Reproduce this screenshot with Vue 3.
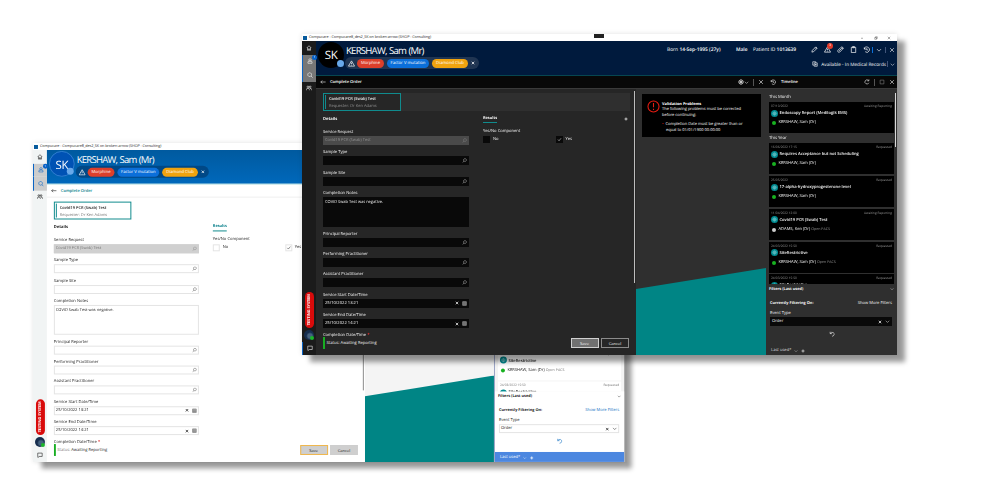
<template>
  <div class="stage">
    <section v-for="w in themes" :key="w" class="window" :class="w">
      <div class="titlebar">
        <span class="app-logo"></span>
        <span class="app-title">Compucare - Compucare8_des2_SK on broken-arrow (SHOP - Consulting)</span>
        <span class="notch"></span>
        <span class="controls"><Icon name="minus" /><Icon name="restore" /><Icon name="close" /></span>
      </div>

      <div class="body">
        <nav class="rail">
          <div class="rail-item"><Icon name="home" /></div>
          <div class="rail-item active"><Icon name="person" /><i class="badge">1</i></div>
          <div class="rail-item active"><Icon name="search" /></div>
          <div class="rail-item"><Icon name="people" /></div>
          <div class="rail-space"></div>
          <div class="testing"><span>TESTING SYSTEM</span></div>
          <div class="globe"><i></i></div>
          <div class="rail-item chat"><Icon name="chat" /></div>
        </nav>

        <div class="main">
          <header class="patient">
            <div class="avatar">SK<i></i></div>
            <div class="identity">
              <h1>KERSHAW, Sam (Mr)</h1>
              <div class="alerts">
                <Icon name="alert" />
                <span class="pill red">Morphine</span>
                <span class="pill blue">Factor V mutation</span>
                <span class="pill amber">Diamond Club</span>
                <Icon name="close" class="bold" />
              </div>
            </div>
            <div class="patient-info">
              <div class="facts">
                <span class="born">Born <b>14-Sep-1995 (27y)</b></span>
                <span class="sex"><b>Male</b></span>
                <span class="pid">Patient ID <b>1013639</b></span>
                <span class="tools">
                  <Icon name="pencil" />
                  <span class="warn"><Icon name="alert" /><i>3</i></span>
                  <Icon name="clip" />
                  <Icon name="clipboard" />
                  <Icon name="history" />
                </span>
                <span class="tool-end"><Icon name="chevron" /></span>
                <span class="tool-close"><Icon name="close" /></span>
              </div>
              <div class="location">
                <Icon name="copy" />
                <span>Available - In Medical Records</span>
                <em></em>
                <Icon name="chevron" />
              </div>
            </div>
          </header>

          <div class="bars">
            <div class="order-bar">
              <Icon name="back" />
              <b>Complete Order</b>
              <span class="grow"></span>
              <Icon name="gear" /><Icon name="chevron" class="tiny" />
              <em></em>
              <Icon name="close" />
            </div>
            <div class="timeline-bar">
              <Icon name="history" />
              <b>Timeline</b>
              <span class="grow"></span>
              <Icon name="refresh" />
              <em></em>
              <Icon name="box" class="dim" />
              <Icon name="close" />
            </div>
          </div>

          <div class="columns">
            <div class="order">
              <div class="order-strip">
                <div class="order-card">
                  <div>
                    <b>Covid19 PCR (Swab) Test</b>
                    <span>Requester: Dr Ken Adams</span>
                  </div>
                </div>
              </div>
              <div class="form">
                <div class="details">
                  <h2>Details</h2>
                  <div v-for="f in fields" :key="f.label" class="field" :class="f.kind">
                    <label>{{ f.label }}<i v-if="f.required"> *</i></label>
                    <div class="input">
                      <span>{{ f.value }}</span>
                      <Icon v-if="f.kind === 'date'" name="close" class="bold" />
                      <Icon v-if="f.kind === 'date'" name="calendar" />
                      <Icon v-else-if="f.kind !== 'notes'" name="lookup" />
                    </div>
                  </div>
                </div>
                <div class="results">
                  <div class="results-head"><b>Results</b><Icon name="plus" class="bold" /></div>
                  <label>Yes/No Component</label>
                  <div class="checks">
                    <span><i class="check"></i>No</span>
                    <span><i class="check"><Icon name="tick" /></i>Yes</span>
                  </div>
                </div>
              </div>
              <div class="order-foot">
                <div class="status"><span>Status:</span> Awaiting Reporting</div>
                <button class="save">Save</button>
                <button>Cancel</button>
              </div>
              <div class="scroll"></div>
            </div>

            <div class="problems">
              <div class="problem-card">
                <svg class="bang" viewBox="0 0 24 24"><circle cx="12" cy="12" r="10.2" /><path d="M12 5.5v8M12 16v2.5" /></svg>
                <div>
                  <b>Validation Problems</b>
                  <p>The following problems must be corrected</p>
                  <p>before continuing:</p>
                  <p class="bullet">Completion Date must be greater than or</p>
                  <p class="indent">equal to 01/01/1900 00:00:00</p>
                </div>
              </div>
              <svg class="slope" viewBox="0 0 130 87" preserveAspectRatio="none"><polygon points="0,21 130,0 130,87 0,87" /></svg>
            </div>

            <aside class="timeline">
              <div class="events">
                <template v-for="(e, i) in events" :key="i">
                  <h3 v-if="e.group">{{ e.group }}</h3>
                  <article>
                    <div class="meta"><span>{{ e.date }}</span><span>{{ e.state }}</span></div>
                    <div class="event"><i><Icon name="target" /></i><b>{{ e.title }}</b></div>
                    <div v-if="e.who" class="who"><i :class="{ away: e.away }"></i>{{ e.who }}<small v-if="e.pacs">Open PACS</small></div>
                  </article>
                </template>
                <div class="event-scroll"></div>
              </div>
              <div class="filters">
                <div class="filter-title"><b>Filters (Last used)</b><Icon name="chevron" /></div>
                <div class="filter-on"><b>Currently Filtering On:</b><a>Show More Filters</a></div>
                <label>Event Type</label>
                <div class="select"><span>Order</span><Icon name="close" class="bold" /><Icon name="chevron" /></div>
                <div class="undo"><Icon name="undo" /></div>
                <div class="filter-foot">Last used* <Icon name="chevron" /><Icon name="plus" class="bold" /></div>
              </div>
            </aside>
          </div>
        </div>
      </div>
    </section>
  </div>
</template>

<script setup>
import { h } from "vue";

const paths = {
  minus: "M4 9h8",
  restore: "M3 6h7v7H3zM6 6V3h7v7h-3",
  close: "M3 3l10 10M13 3L3 13",
  home: "M2 8l6-6 6 6M4 7v7h3v-4h2v4h3V7",
  person: "M8 2a3 3 0 1 0 .1 0M2.5 14V11q0-2.500 3-2.500h5q3 0 3 2.500v3z",
  search: "M7 2a5 5 0 1 0 .1 0M10.500 10.500L15 15",
  lookup: "M9.500 2a4.500 4.500 0 1 0 .1 0M6.500 10L2 14",
  people: "M5 3a2.300 2.300 0 1 0 .1 0M11 3a2.300 2.300 0 1 0 .1 0M1 14v-2q0-3 4-3t4 3v2M10 9q5-.5 5 3v2",
  chat: "M2 3h12v9H6l-3 3v-3H2z",
  alert: "M8 2L15 14H1zM8 6v4M8 11.500v1",
  pencil: "M2 14l1-4 8-8 3 3-8 8zM9.500 3.500l3 3",
  clip: "M5 11l6-6q1.500-1 2 .5t-1 2.500l-6 6q-2 1-3.500-.5t-.5-3.500l7-7q2-1.500 4 0t.5 4",
  clipboard: "M3 3h10v12H3zM6 3V1h4v3H6z",
  history: "M3 3v4h4M3 7a6 6 0 1 1 2 6M8.500 5v4h3",
  chevron: "M2.500 5.500L8 11l5.500-5.500",
  copy: "M6 5h8v9H6zM6 11H2V2h8v3M10 7v5M8 9.500h4",
  back: "M15 8H2M6 4L2 8l4 4",
  gear: "M8 2a6 6 0 1 0 .1 0M8 2v12M2 8h12M4 4l8 8M12 4l-8 8",
  refresh: "M13 10a5.500 5.500 0 1 1-1-6M13 1v4H9",
  box: "M3 3h10v10H3z",
  calendar: "M2 2h12v12H2zM2 6h12M2 10h12M6 2v12M10 2v12",
  plus: "M8 2v12M2 8h12",
  tick: "M3 8l3.500 4L13 4",
  target: "M8 3a5 5 0 1 0 .1 0M8 6a2 2 0 1 0 .1 0",
  undo: "M3 2v5h5M3 7q3-5 8-3 4 2 2.500 6T8 14",
};

const Icon = (props) => h("svg", { class: "icon", viewBox: "0 0 16 16" }, [h("path", { d: paths[props.name] })]);
Icon.props = ["name"];

const themes = ["light", "dark"];

const fields = [
  { label: "Service Request", value: "Covid19 PCR (Swab) Test", kind: "locked" },
  { label: "Sample Type" },
  { label: "Sample Site" },
  { label: "Completion Notes", value: "COVID Swab Test was negative.", kind: "notes" },
  { label: "Principal Reporter" },
  { label: "Performing Practitioner" },
  { label: "Assistant Practitioner" },
  { label: "Service Start Date/Time", value: "25/10/2022 13:21", kind: "date" },
  { label: "Service End Date/Time", value: "25/10/2022 14:21", kind: "date" },
  { label: "Completion Date/Time", kind: "date", required: true },
];

const events = [
  { group: "This Month", date: "07/10/2022", state: "Awaiting Reporting", title: "Endoscopy Report (Medilogik EMS)", who: "KERSHAW, Sam (Dr)" },
  { group: "This Year", date: "16/06/2022 17:15", state: "Requested", title: "Requires Acceptance but not Scheduling", who: "KERSHAW, Sam (Dr)" },
  { date: "25/05/2022", state: "Requested", title: "17-alpha-hydroxyprogesterone level", who: "KERSHAW, Sam (Dr)" },
  { date: "11/04/2022 12:00", state: "Awaiting Reporting", title: "Covid19 PCR (Swab) Test", who: "ADAMS, Ken (Dr)", away: true, pacs: true },
  { date: "24/03/2022 15:50", state: "Requested", title: "SiteRestrictive", who: "KERSHAW, Sam (Dr)", pacs: true },
  { date: "24/03/2022 15:50", state: "Requested", title: "SiteRestrictive" },
];
</script>

<style>
body { background: #fff; }
</style>

<style scoped>
.stage {
  position: relative;
  width: 1000px;
  height: 500px;
  overflow: hidden;
  background: #fff;
}
.window {
  position: absolute;
  width: 595px;
  height: 321px;
  display: flex;
  flex-direction: column;
  font: 4.1px/6px "Open Sans", "Noto Sans", sans-serif;
  text-rendering: geometricPrecision;
  white-space: nowrap;
  color: var(--text);
  background: var(--bg);
  box-shadow: 8px 7px 5px rgba(0, 0, 0, 0.4), 0 0 5px rgba(0, 0, 0, 0.12);
}
.window * { box-sizing: border-box; }
.dark {
  left: 302px;
  top: 34px;
  --text: #f2f2f2;
  --muted: #929292;
  --bg: #262626;
  --rail: #1b1b1b;
  --active: #777;
  --head: #001a3d;
  --head-line: #064650;
  --avatar: #000;
  --alerts: #203552;
  --bar: #080808;
  --bar-text: #fff;
  --strip: #2f2f2f;
  --card: #262626;
  --input: #090909;
  --line: #090909;
  --locked: #4a4a4a;
  --panel: #2f2f2f;
  --event: #000;
  --foot: #2f2f2f;
  --foot-text: #ddd;
  --link: #f2f2f2;
  --thumb: #bdbdbd;
  --edge: #3a3a3a;
}
.light {
  left: 33px;
  top: 143px;
  transform: scale(0.9935);
  transform-origin: 0 0;
  --text: #222;
  --muted: #777;
  --bg: #fff;
  --rail: #f1f4f4;
  --active: #ccc;
  --head: #0061b0;
  --head-line: #a9dcdf;
  --avatar: #0052b4;
  --alerts: #004886;
  --bar: #fff;
  --bar-text: #087f8a;
  --strip: #fff;
  --card: #fff;
  --input: #fff;
  --line: #e4e4e4;
  --locked: #d0d0d0;
  --panel: #f4f4f4;
  --event: #fff;
  --foot: #4c87e0;
  --foot-text: #fff;
  --link: #1672c4;
  --thumb: #8b8b8b;
  --edge: #eee;
}
.icon {
  width: 6px;
  height: 6px;
  flex: none;
  fill: none;
  stroke: currentColor;
  stroke-width: 1.6;
}
.icon.bold { width: 4px; height: 4px; stroke-width: 3; }
.icon.tiny { width: 5px; height: 5px; }
.icon.dim { opacity: 0.5; }
.grow { flex: 1; }
b, h2 { font-weight: 700; }
h1, h2, h3, p { margin: 0; }

.titlebar {
  height: 7px;
  display: flex;
  align-items: center;
  background: #fff;
  color: #333;
  font-size: 3.8px;
  position: relative;
}
.app-logo { width: 4px; height: 4px; margin: 0 2px 0 1px; background: #075a9c; }
.app-title { padding-top: 1px; letter-spacing: -0.1px; }
.notch { position: absolute; left: 292px; top: 0; width: 10px; height: 4px; background: #222; }
.light .notch { display: none; }
.controls { margin-left: auto; display: flex; gap: 9.5px; padding-right: 6px; }
.controls .icon { width: 4px; height: 4px; }

.body { flex: 1; display: flex; min-height: 0; }
.rail { width: 14px; display: flex; flex-direction: column; align-items: center; background: var(--rail); }
.rail-item { position: relative; width: 14px; height: 13.5px; flex: none; display: flex; align-items: center; justify-content: center; }
.rail-item.active { background: var(--active); border-left: 1px solid #0a63c4; color: #fff; }
.light .rail-item.active { color: #0a63c4; }
.badge { position: absolute; right: -1px; top: 0; width: 5px; height: 5px; border-radius: 50%; background: #0862c8; color: #fff; font: 3px/5px "Open Sans", sans-serif; text-align: center; z-index: 1; }
.rail-space { flex: 1; }
.testing { width: 9px; height: 36px; flex: none; border-radius: 5px; background: #d90b0b; display: flex; align-items: center; justify-content: center; }
.testing span { writing-mode: vertical-rl; transform: rotate(180deg); font-size: 3.9px; font-weight: 700; letter-spacing: -0.05px; color: #fff; line-height: 9px; }
.globe { position: relative; width: 10px; height: 10px; flex: none; margin: 2px 0 2px; border-radius: 50%; background: radial-gradient(circle at 60% 60%, #45617e 0 25%, #152c4d 45%); }
.globe i { position: absolute; right: 0; bottom: 0; width: 4px; height: 4px; border-radius: 50%; background: #1bb52b; }
.dark .rail-item.chat { border-left: 1px solid #0a63c4; }

.main { flex: 1; min-width: 0; display: flex; flex-direction: column; }
.patient { height: 35px; display: flex; padding: 1px 2px 0; background: var(--head); border-bottom: 1.500px solid var(--head-line); color: #fff; }
.light .patient { background: linear-gradient(#005a9f, #0068bb); }
.avatar { position: relative; width: 26px; height: 26px; flex: none; border-radius: 50%; background: var(--avatar); font-size: 11.5px; line-height: 27px; text-align: center; letter-spacing: -0.3px; }
.light .avatar { border: 0.5px solid #2f7ed0; }
.avatar i { position: absolute; right: 0; bottom: 1px; width: 7px; height: 7px; border-radius: 50%; background: #68a9ea; }
.identity { padding: 1.5px 0 0 1px; }
h1 { font-size: 9.6px; line-height: 13px; font-weight: 400; letter-spacing: -0.77px; word-spacing: 0.6px; padding-left: 1px; }
.alerts { display: flex; align-items: center; width: 134px; height: 12px; margin-top: 0.5px; padding: 0 4px 0 3px; border-radius: 6px; background: var(--alerts); }
.alerts .icon { width: 7px; height: 7px; margin-right: 2px; }
.alerts .icon.bold { width: 4px; height: 4px; margin: 0 0 0 auto; }
.pill { height: 9px; border-radius: 5px; line-height: 10.5px; text-align: center; font-size: 4.2px; margin-right: 3px; }
.pill.red { width: 27px; background: #dc3f2b; }
.pill.blue { width: 42px; background: #0b6fda; }
.pill.amber { width: 36px; margin-right: 0; background: #f0a30f; }
.patient-info { margin-left: auto; width: 228px; }
.facts { display: flex; align-items: center; height: 15px; font-size: 4.9px; }
.born { width: 69px; }
.sex { width: 17px; }
.pid { width: 58px; }
.tools { display: flex; align-items: center; gap: 6px; width: 61px; }
.tools .icon, .warn .icon { width: 7px; height: 7px; }
.warn { position: relative; display: flex; }
.warn i { position: absolute; right: -2px; top: -3px; width: 6px; height: 6px; border-radius: 50%; background: #e33a2b; font: 3.5px/6px "Open Sans", sans-serif; text-align: center; }
.tool-end { display: flex; width: 13px; padding-left: 3px; border-left: 1px solid #0a6fd8; }
.tool-close { display: flex; padding-left: 3px; border-left: 1px solid #41557a; }
.facts b { font-weight: 600; }
.location { display: flex; align-items: center; justify-content: flex-end; height: 14px; font-size: 4.7px; }
.location span { margin-left: 3px; padding-top: 1px; }
.location em { width: 1px; height: 6px; margin: 0 2px 0 1px; background: #41557a; }
.location .icon:last-child { width: 5px; height: 5px; }

.bars { display: flex; height: 13px; background: var(--bar); border-bottom: 1px solid var(--edge); }
.bars > div { display: flex; align-items: center; }
.bars em { width: 1px; height: 7px; margin: 0 4px; background: #555; }
.bars b { padding-top: 2px; font-weight: 600; color: var(--bar-text); font-size: 4.1px; }
.order-bar { width: 450px; padding: 0 2px 0 4px; }
.order-bar b { margin-left: 4px; }
.timeline-bar { flex: 1; padding: 0 2px 0 4px; }
.timeline-bar b { margin-left: 5px; }
.timeline-bar .dim { margin-right: 4px; }

.columns { flex: 1; display: flex; min-height: 0; }
.order { position: relative; width: 320px; overflow: hidden; padding: 4px 7px 0; background: var(--bg); }
.order-strip { height: 18px; margin-right: -1px; background: var(--strip); }
.order-card { width: 78px; height: 18px; padding: 1px; border: 1.500px solid #108b8d; background: var(--card); }
.order-card div { display: flex; flex-direction: column; height: 14px; padding: 1px 0 0 3px; border-left: 1.500px solid #108b8d; line-height: 7px; font-size: 4px; }
.order-card b { font-weight: 600; }
.order-card span { color: var(--muted); }
.form { display: flex; }
.details { width: 146px; flex: none; }
h2 { font-size: 4.1px; line-height: 8px; margin: 5px 0 4px; }
.field { height: 20.35px; display: flex; flex-direction: column; }
.field label { height: 8px; line-height: 10px; font-size: 4.1px; }
.field label i { color: #e03030; font-weight: 700; }
.input { height: 9px; flex: none; display: flex; align-items: center; gap: 3px; padding: 0 1px; background: var(--input); border: 1px solid var(--line); font-size: 4px; }
.input span { flex: 1; padding-top: 1.5px; }
.date .input span { font-size: 4.1px; }
.input .icon:last-child { width: 5px; height: 5px; opacity: 0.8; }
.locked .input { background: var(--locked); border-color: var(--locked); color: var(--muted); }
.notes { height: 40.7px; }
.notes .input { height: 29.500px; align-items: flex-start; }
.results { flex: 1; padding: 4px 2px 0 14px; }
.results-head { display: flex; align-items: center; justify-content: space-between; height: 8px; }
.results-head b { padding-top: 1px; border-bottom: 1px solid #108b8d; line-height: 6px; font-size: 3.9px; }
.light .results-head b { color: #087f8a; }
.results label { display: block; margin-top: 5px; line-height: 7.5px; font-size: 4.1px; }
.checks { display: flex; }
.checks span { display: flex; align-items: center; gap: 3px; width: 72.5px; line-height: 7.5px; }
.check { width: 7px; height: 7px; display: flex; align-items: center; justify-content: center; background: var(--input); border: 1px solid var(--line); }
.check .icon { flex: none; width: 5px; height: 5px; }
.order-foot { position: absolute; left: 7px; right: 7px; bottom: 0; height: 18px; display: flex; align-items: flex-start; gap: 2.500px; background: var(--bg); }
.status { flex: 1; height: 12px; line-height: 14px; padding-left: 1.5px; border-left: 2px solid #18ae22; font-size: 4.1px; }
.light .status span { color: var(--muted); }
button { width: 28px; height: 10px; margin-top: 1px; padding: 1px 0 0; border: 1px solid #8b8b8b; background: #262626; color: inherit; font: inherit; line-height: 8px; }
button.save { background: #717171; border-color: #d0d0d0; }
.light button { background: #cfcfcf; border-color: #cfcfcf; }
.light button.save { border-color: #f0b74c; }
.scroll { position: absolute; right: 1px; top: 2px; width: 1.5px; height: 192px; background: var(--thumb); }

.problems { width: 130px; display: flex; flex-direction: column; justify-content: space-between; padding-top: 5px; background: var(--panel); }
.problem-card { display: flex; width: 119px; height: 43px; margin-left: 5.5px; padding: 6px 5px; gap: 2px; background: #000; line-height: 5.8px; color: #fff; font-size: 4px; }
.problem-card > div { padding: 1.5px 0 0 0.5px; }
.problem-card b { display: block; font-size: 3.9px; }
.bang { width: 13px; height: 13px; flex: none; fill: none; stroke: #e51c12; stroke-width: 2; }
.bullet { margin-top: 3.500px; }
.bullet::before { content: "•"; color: #e51c12; margin-right: 2px; }
.indent { padding-left: 4px; }
.slope { width: 130px; height: 87px; display: block; fill: #008585; }

.timeline { flex: 1; min-width: 0; display: flex; flex-direction: column; background: var(--panel); }
.light .timeline { border-left: 1px solid #9ba4c5; }
.events { position: relative; height: 195px; overflow: hidden; padding: 4.5px 3px 0; }
h3 { height: 8.500px; line-height: 7.5px; font-size: 4.2px; font-weight: 400; }
h3:not(:first-child) { margin-top: 0.500px; }
article { height: 31px; margin-bottom: 1.800px; padding: 1px 2px; background: var(--event); }
.meta { display: flex; justify-content: space-between; height: 5px; line-height: 6px; font-size: 3.2px; color: var(--muted); }
.event { display: flex; align-items: center; height: 10px; }
.event b { padding-top: 2px; font-weight: 600; font-size: 4.1px; }
.event i { display: flex; align-items: center; justify-content: center; width: 7px; height: 7px; margin-right: 1.5px; border-radius: 50%; background: #008b91; color: #bfe9ea; }
.event .icon { width: 5px; height: 5px; }
.who { display: flex; align-items: center; height: 10px; line-height: 8px; }
.who i { width: 4px; height: 4px; margin: 0 2.5px 0 1px; border-radius: 50%; background: #18b120; }
.who i.away { background: #ccc; }
.who small { margin-left: 1px; font-size: 3.600px; color: var(--muted); }
.event-scroll { position: absolute; right: 1px; top: 4px; width: 1px; height: 54px; background: #d8d8d8; }
.filters { flex: 1; display: flex; flex-direction: column; padding: 2px 3px 0; }
.light .filters { background: #fff; }
.filter-title, .filter-on { display: flex; align-items: center; justify-content: space-between; height: 6px; font-size: 3.9px; }
.filter-title b, .filter-on b, .filter-on a { padding-top: 2px; }
.filter-title .icon { width: 4px; height: 4px; }
.filter-on { margin: 8px 2px 4px 1px; }
.filter-on a { color: var(--link); font-size: 4.1px; }
.filters label { height: 6px; margin-left: 1px; line-height: 8px; }
.select { display: flex; align-items: center; gap: 3px; height: 9px; margin: 1px 2px 0 1px; padding: 0 1px; background: var(--input); border: 1px solid var(--line); }
.select span { flex: 1; padding-top: 1px; }
.select .icon:last-child { width: 5px; height: 5px; }
.undo { display: flex; justify-content: center; margin-top: 5px; }
.light .undo { color: #1672c4; }
.filter-foot { display: flex; align-items: center; gap: 3px; height: 10px; margin: auto -3px 0; padding: 1px 0 0 5px; background: var(--foot); color: var(--foot-text); }
.filter-foot .icon { width: 4px; height: 4px; }
</style>
